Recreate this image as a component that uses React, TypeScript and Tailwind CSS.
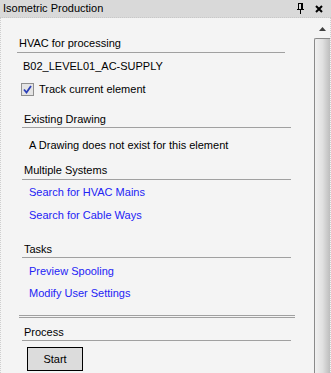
import React from 'react'

const font = { fontFamily: '"Liberation Sans", Arial, sans-serif' }

function Header ({ children, className = '' }: { children: React.ReactNode, className?: string }) {
  return (
    <div className={`border-b border-[#a0a0a0] pl-[2px] text-black ${className}`}>
      {children}
    </div>
  )
}

function LinkRow ({ children, className = '' }: { children: React.ReactNode, className?: string }) {
  return <div className={`ml-[28px] text-[#2323f5] ${className}`}>{children}</div>
}

export default function App () {
  return (
    <div className="w-[331px] h-[373px] flex flex-col bg-[#f4f4f4] text-[11px] leading-[13px] overflow-hidden" style={font}>
      {/* title bar */}
      <div className="h-[18px] shrink-0 bg-[#d9d9d9] flex items-center pl-[3px] pr-[8px] border-b border-dotted border-[#c8c8c8]">
        <span className="flex-1 text-black">Isometric Production</span>
        <svg width="7" height="11" viewBox="0 0 7 11" className="mr-[11px]">
          <rect x="1.5" y="0.5" width="4" height="6" fill="none" stroke="#000" />
          <rect x="4" y="1" width="1" height="5" fill="#000" />
          <rect x="0" y="6" width="7" height="1" fill="#000" />
          <rect x="3" y="7" width="1" height="4" fill="#000" />
        </svg>
        <svg width="8" height="8" viewBox="0 0 8 8">
          <path d="M1 1 L7 7 M7 1 L1 7" stroke="#000" strokeWidth="2" />
        </svg>
      </div>

      <div className="flex flex-1 min-h-0 border-l border-dotted border-[#cfcfcf]">
        {/* content */}
        <div className="flex-1 min-w-0">
          <Header className="ml-[16px] w-[268px] mt-[19px] pb-[2px]">HVAC for processing</Header>
          <div className="ml-[22px] mt-[7px]">B02_LEVEL01_AC-SUPPLY</div>
          <div className="ml-[20px] mt-[10px] flex items-center h-[13px]">
            <div className="w-[13px] h-[13px] border border-[#8f8f8f] bg-[#e4e4e4] flex items-center justify-center">
              <svg width="9" height="9" viewBox="0 0 9 9">
                <path d="M1 4.5 L3.5 7.5 L8 1" fill="none" stroke="#2b3fb8" strokeWidth="1.8" />
              </svg>
            </div>
            <span className="ml-[5px]">Track current element</span>
          </div>

          <Header className="ml-[21px] w-[269px] mt-[17px] pb-[1px]">Existing Drawing</Header>
          <div className="ml-[28px] mt-[11px]">A Drawing does not exist for this element</div>

          <Header className="ml-[21px] w-[269px] mt-[12px] pb-[2px]">Multiple Systems</Header>
          <LinkRow className="mt-[6px]">Search for HVAC Mains</LinkRow>
          <LinkRow className="mt-[10px]">Search for Cable Ways</LinkRow>

          <Header className="ml-[21px] w-[269px] mt-[21px] pb-[1px]">Tasks</Header>
          <LinkRow className="mt-[7px]">Preview Spooling</LinkRow>
          <LinkRow className="mt-[9px]">Modify User Settings</LinkRow>

          <div className="ml-[18px] w-[276px] mt-[15px] h-[3px] border-y border-[#a0a0a0]" />

          <Header className="ml-[21px] w-[269px] mt-[8px] pb-[1px]">Process</Header>
          <button className="ml-[26px] mt-[6px] w-[56px] h-[24px] bg-[#dcdcdc] border border-black text-black text-[11px] leading-[13px]" style={font}>
            Start
          </button>
        </div>

        {/* scrollbar */}
        <div className="w-[17px] shrink-0 flex flex-col border-r border-dotted border-[#cfcfcf]">
          <div className="h-[20px] flex items-end justify-center pb-[7px] pl-[1px]">
            <svg width="7" height="4" viewBox="0 0 7 4">
              <path d="M3.5 0 L7 4 L0 4 Z" fill="#404040" />
            </svg>
          </div>
          <div className="flex-1 border-l border-t border-[#8a8a8a] rounded-tl-[2px] bg-gradient-to-r from-[#f0f0f0] via-[#e0e0e0] to-[#bdbdbd]" />
        </div>
      </div>
    </div>
  )
}
